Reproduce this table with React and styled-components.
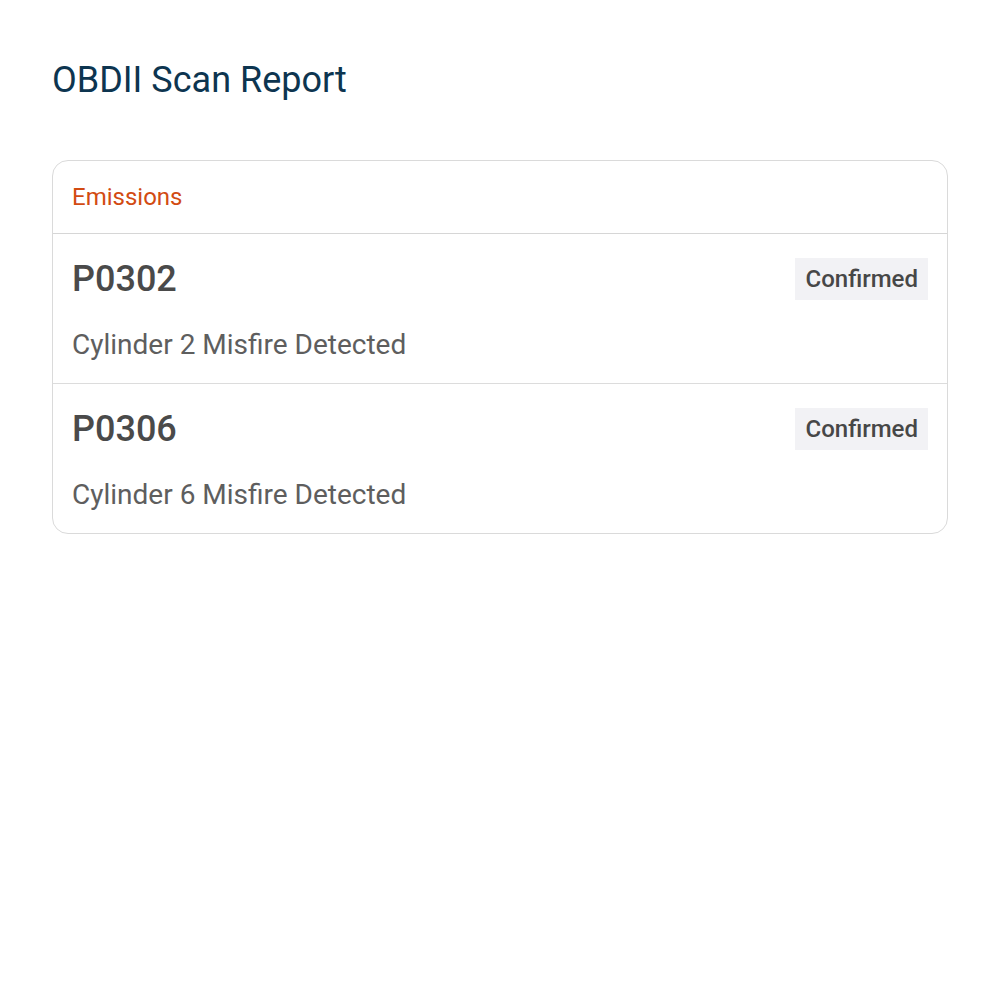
import React from 'react';
import styled, { createGlobalStyle } from 'styled-components';

const GlobalStyle = createGlobalStyle`
  body {
    margin: 0;
    background: #ffffff;
    font-family: Roboto, "Liberation Sans", sans-serif;
  }
`;

const Page = styled.div`
  padding: 52px 52px;
`;

const Title = styled.h1`
  margin: 0 0 52px;
  font-size: 36px;
  line-height: 56px;
  font-weight: 400;
  color: #0d3550;
`;

const Card = styled.div`
  border: 1px solid #dadada;
  border-radius: 16px;
  overflow: hidden;
`;

const CardHeader = styled.div`
  display: flex;
  align-items: center;
  height: 72px;
  padding: 0 19px;
  border-bottom: 1px solid #d6d6d6;
  font-size: 24px;
  color: #d24b12;
`;

const Row = styled.div`
  display: flex;
  flex-direction: column;
  padding: 24px 19px 18px;
  border-top: ${p => (p.first ? 'none' : '1px solid #dcdcdc')};
`;

const RowTop = styled.div`
  display: flex;
  align-items: center;
  justify-content: space-between;
  height: 42px;
`;

const Code = styled.span`
  font-size: 36px;
  font-weight: 500;
  color: #4a4a4a;
`;

const Badge = styled.span`
  display: inline-flex;
  align-items: center;
  height: 42px;
  padding: 0 10px 0 11px;
  background: #f2f2f5;
  font-size: 24px;
  font-weight: 500;
  color: #474747;
`;

const Description = styled.div`
  margin-top: 25px;
  font-size: 28px;
  line-height: 40px;
  color: #5e5e5e;
`;

const codes = [
  { code: 'P0302', status: 'Confirmed', text: 'Cylinder 2 Misfire Detected' },
  { code: 'P0306', status: 'Confirmed', text: 'Cylinder 6 Misfire Detected' },
];

const App = () => (
  <Page>
    <GlobalStyle />
    <Title>OBDII Scan Report</Title>
    <Card>
      <CardHeader>Emissions</CardHeader>
      {codes.map((c, i) => (
        <Row key={c.code} first={i === 0}>
          <RowTop>
            <Code>{c.code}</Code>
            <Badge>{c.status}</Badge>
          </RowTop>
          <Description>{c.text}</Description>
        </Row>
      ))}
    </Card>
  </Page>
);

export default App;
